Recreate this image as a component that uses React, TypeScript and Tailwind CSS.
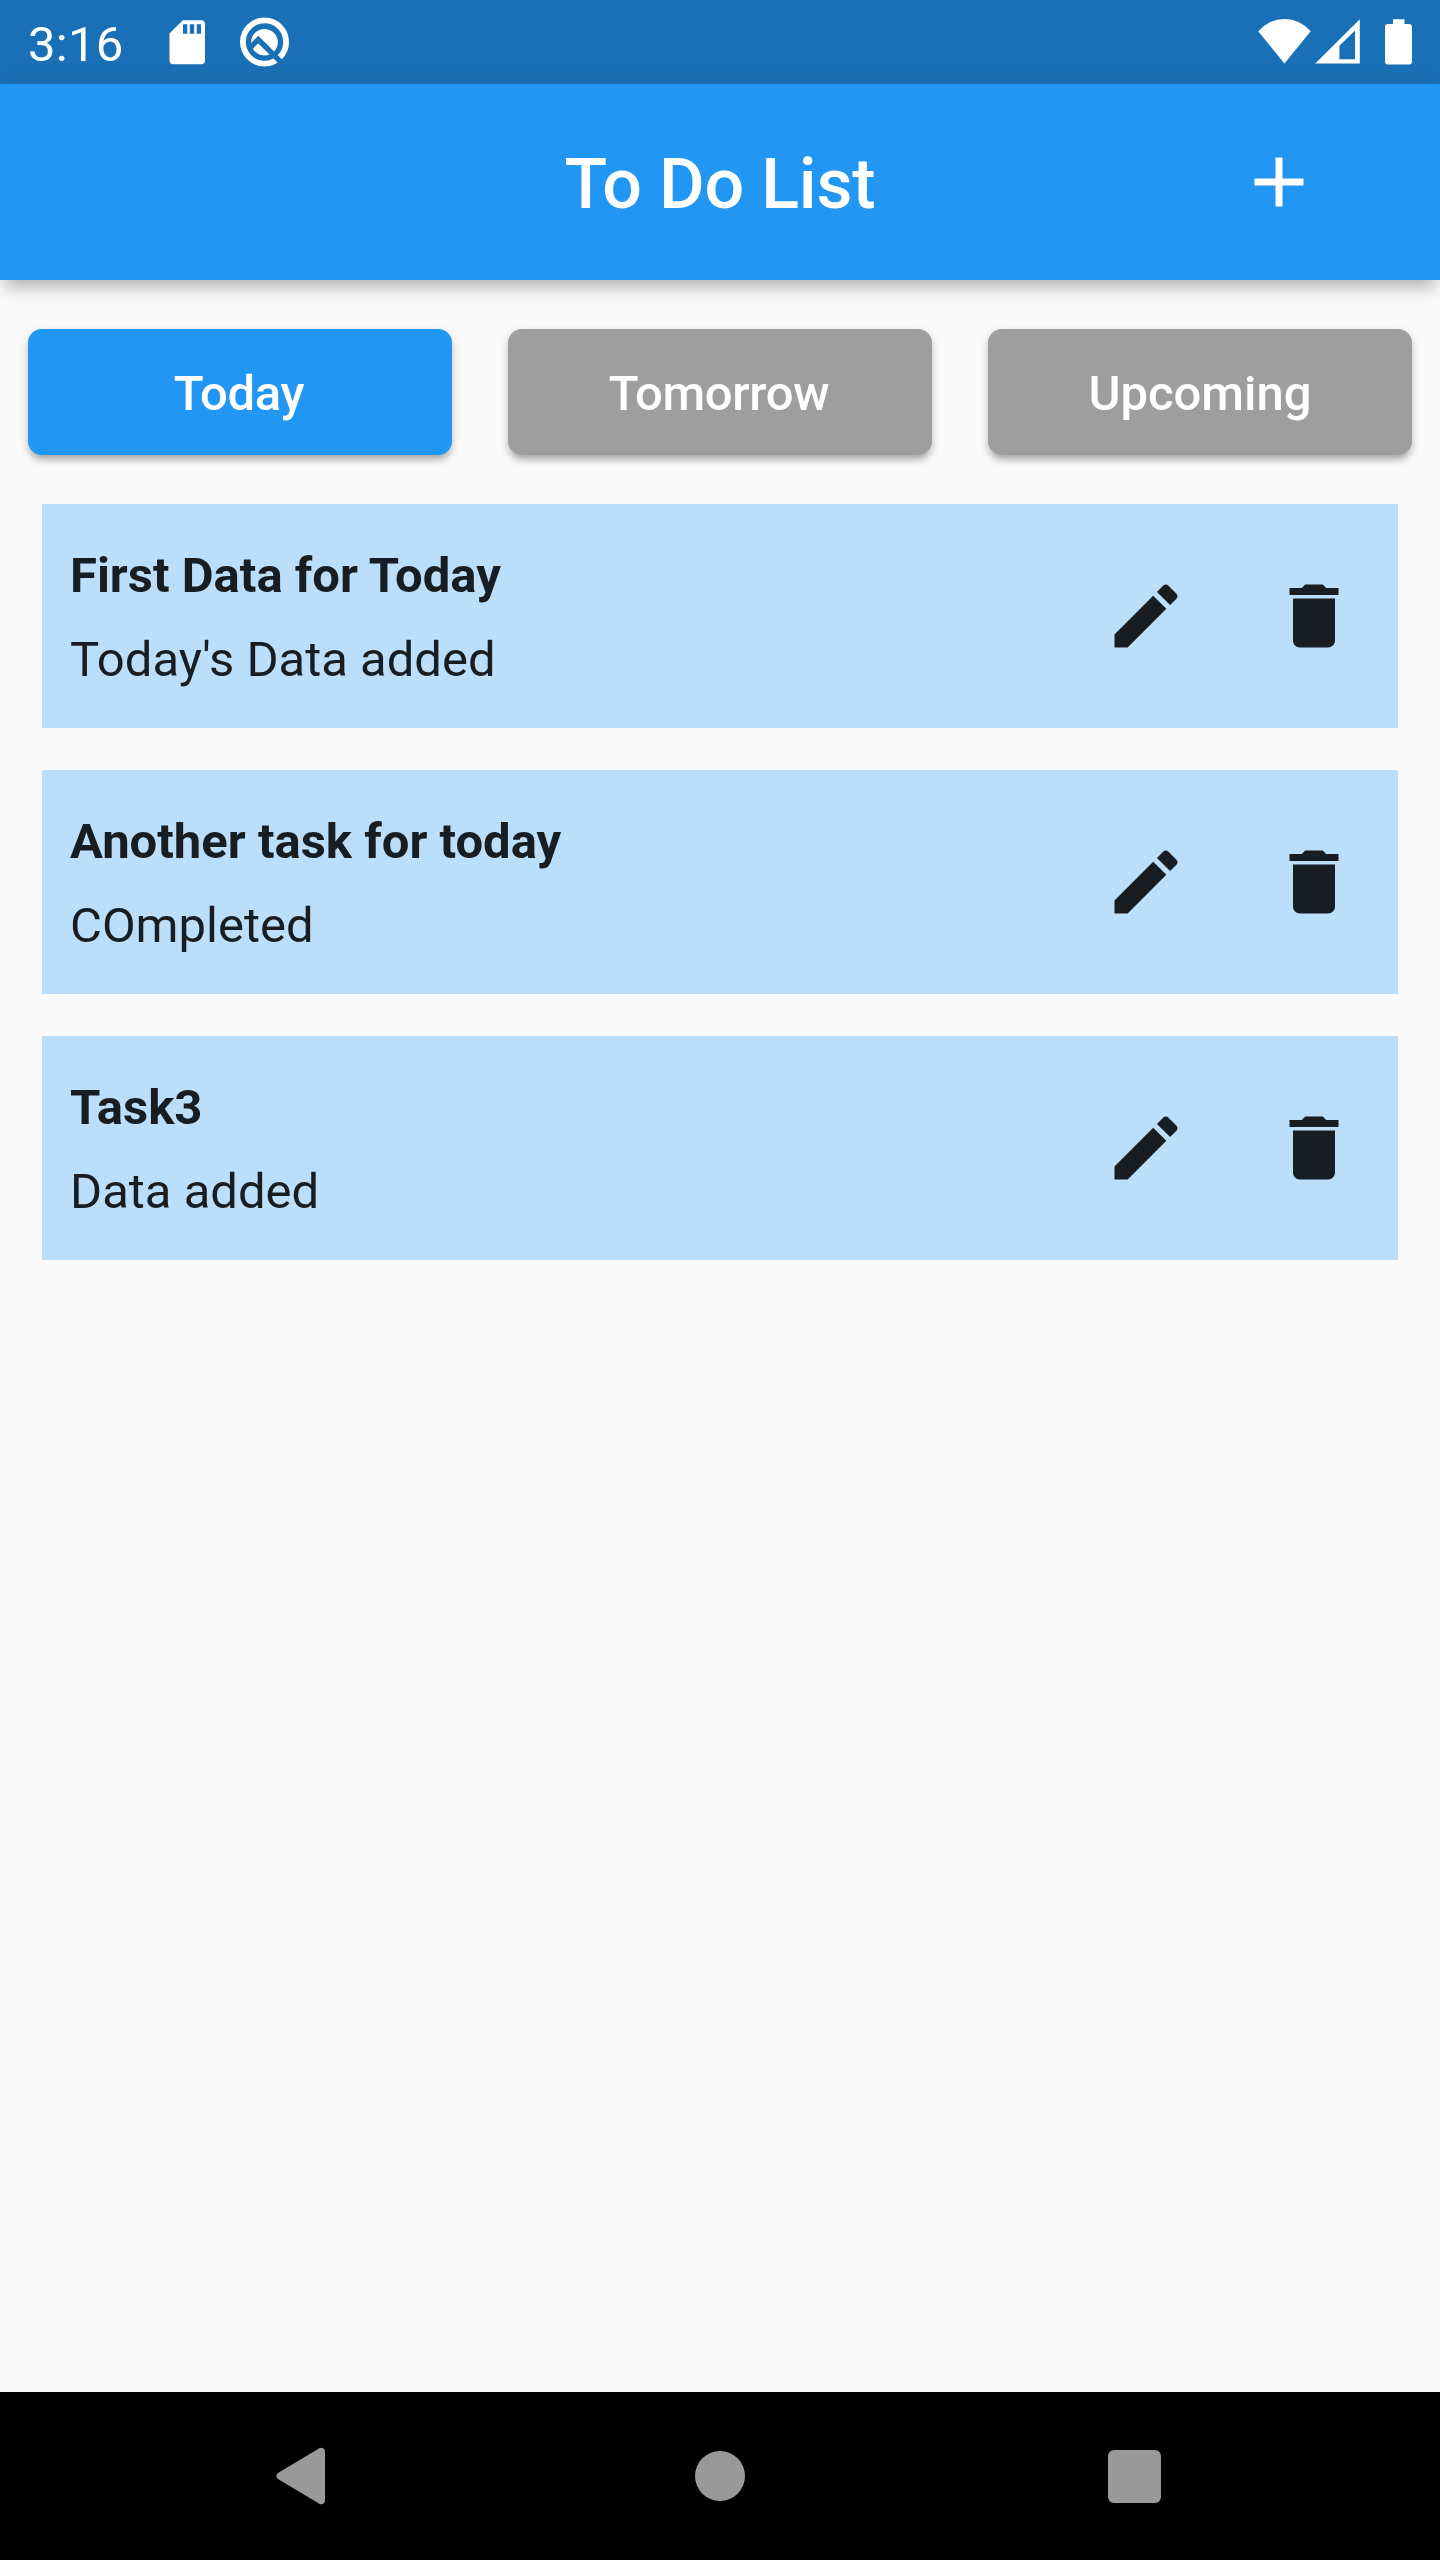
import React from "react";

const tabs = [
  { label: "Today", active: true, spacing: "-left-px tracking-[-0.3px]" },
  { label: "Tomorrow", active: false, spacing: "-left-px tracking-[-0.3px]" },
  { label: "Upcoming", active: false, spacing: "left-0" },
];

const tasks = [
  { title: "First Data for Today", detail: "Today's Data added" },
  { title: "Another task for today", detail: "COmpleted" },
  { title: "Task3", detail: "Data added" },
];

const icons = {
  add: "M19 13h-6v6h-2v-6H5v-2h6V5h2v6h6v2z",
  edit: "M3 17.25V21h3.75L17.81 9.94l-3.75-3.75L3 17.25zM20.71 7.04c.39-.39.39-1.02 0-1.41l-2.34-2.34c-.39-.39-1.02-.39-1.41 0l-1.83 1.83 3.75 3.75 1.83-1.83z",
  remove: "M6 19c0 1.1.9 2 2 2h8c1.1 0 2-.9 2-2V7H6v12zM19 4h-3.5l-1-1h-5l-1 1H5v2h14V4z",
};

function MaterialIcon({ path }: { path: string }) {
  return (
    <svg viewBox="0 0 24 24" className="size-[84px]" fill="currentColor">
      <path d={path} />
    </svg>
  );
}

function StatusBar() {
  return (
    <div className="flex h-[84px] items-center justify-between bg-[#1970b6] px-[28px] text-white">
      <div className="flex items-center">
        <span className="w-[141px] pt-[4px] text-[49px] leading-[57px] tracking-[0.3px]">3:16</span>
        <svg className="h-[84px] w-[37px]" viewBox="169 0 37 84" fill="currentColor">
          <path d="M182.8 20.2H201a4 4 0 0 1 4 4V60.3a4 4 0 0 1-4 4H173.5a4 4 0 0 1-4-4V33.5z" />
          <path d="M183 24.3h4.3v9.4H183zM189.8 24.3h4.4v9.4h-4.4zM196.7 24.3h4.3v9.4h-4.3z" fill="#1970b6" />
        </svg>
        <svg className="ml-[33px] h-[84px] w-[51px]" viewBox="239 0 51 84">
          <circle cx="264.5" cy="42" r="21.6" fill="none" stroke="white" strokeWidth="5.8" />
          <circle cx="264.5" cy="42.2" r="13.3" fill="white" />
          <path d="M249 48.8 258.3 39.5 285 66.2" fill="none" stroke="#1970b6" strokeWidth="5.4" />
        </svg>
      </div>
      <svg className="h-[84px] w-[155px]" viewBox="1257 0 155 84" fill="currentColor">
        <path d="M1284.4 63.4 1258.2 31.3A34 34 0 0 1 1310.7 31.3z" />
        <path fillRule="evenodd" d="M1315.3 63.5 1359.8 19.3V63.5zM1339.4 45.8V59.3H1355V30.5z" />
        <path d="M1393 19.3h11.5V24H1409a3 3 0 0 1 3 3V61.5a3 3 0 0 1-3 3H1388a3 3 0 0 1-3-3V27a3 3 0 0 1 3-3h5z" />
      </svg>
    </div>
  );
}

function AppBar() {
  return (
    <header className="grid h-[196px] grid-cols-3 items-center bg-[#2196f3] text-white shadow-[0_13px_14px_-5px_rgba(0,0,0,0.2),0_4px_26px_0px_rgba(0,0,0,0.1)]">
      <h1 className="col-start-2 pt-[3px] text-center text-[70px] leading-[82px] font-medium tracking-[-0.2px] whitespace-nowrap">
        To Do List
      </h1>
      <button className="mr-[119px] justify-self-end">
        <MaterialIcon path={icons.add} />
      </button>
    </header>
  );
}

function NavBar() {
  return (
    <nav className="flex h-[168px] items-center bg-black pl-[276px] text-[#999999]">
      <svg className="h-[58px] w-[50px]" viewBox="0 0 50 58" fill="currentColor">
        <path d="M2 26 43.3 1.2A3.8 3.8 0 0 1 49 4.5V53.5A3.8 3.8 0 0 1 43.3 56.8L2 32A3.6 3.6 0 0 1 2 26z" />
      </svg>
      <div className="ml-[369px] size-[50px] rounded-full bg-[#999999]" />
      <div className="ml-[363px] size-[53px] rounded-[6px] bg-[#999999]" />
    </nav>
  );
}

export default function App() {
  return (
    <div className="flex h-[2560px] w-[1440px] flex-col overflow-hidden bg-[#fafafa] font-['Roboto',sans-serif]">
      <StatusBar />
      <AppBar />
      <main className="flex-1">
        <div className="grid grid-cols-3 gap-[56px] px-[28px] pt-[49px]">
          {tabs.map((tab) => (
            <button
              key={tab.label}
              className={`h-[126px] rounded-[14px] text-[49px] leading-[57px] font-medium text-white shadow-[0_7px_8px_-3px_rgba(0,0,0,0.26),0_3px_9px_0px_rgba(0,0,0,0.16)] ${
                tab.active ? "bg-[#2196f3]" : "bg-[#9e9e9e]"
              }`}
            >
              <span className={`relative top-px ${tab.spacing}`}>{tab.label}</span>
            </button>
          ))}
        </div>
        <ul className="flex flex-col gap-[42px] px-[42px] pt-[49px]">
          {tasks.map((task) => (
            <li key={task.title} className="flex h-[224px] items-center bg-[#bbdefb] pl-[28px] text-black/87">
              <div className="flex flex-1 flex-col gap-[27px] pt-[2px] text-[49px] leading-[57px]">
                <p className="font-bold">{task.title}</p>
                <p>{task.detail}</p>
              </div>
              <button className="flex size-[168px] items-center justify-center">
                <MaterialIcon path={icons.edit} />
              </button>
              <button className="flex size-[168px] items-center justify-center">
                <MaterialIcon path={icons.remove} />
              </button>
            </li>
          ))}
        </ul>
      </main>
      <NavBar />
    </div>
  );
}
